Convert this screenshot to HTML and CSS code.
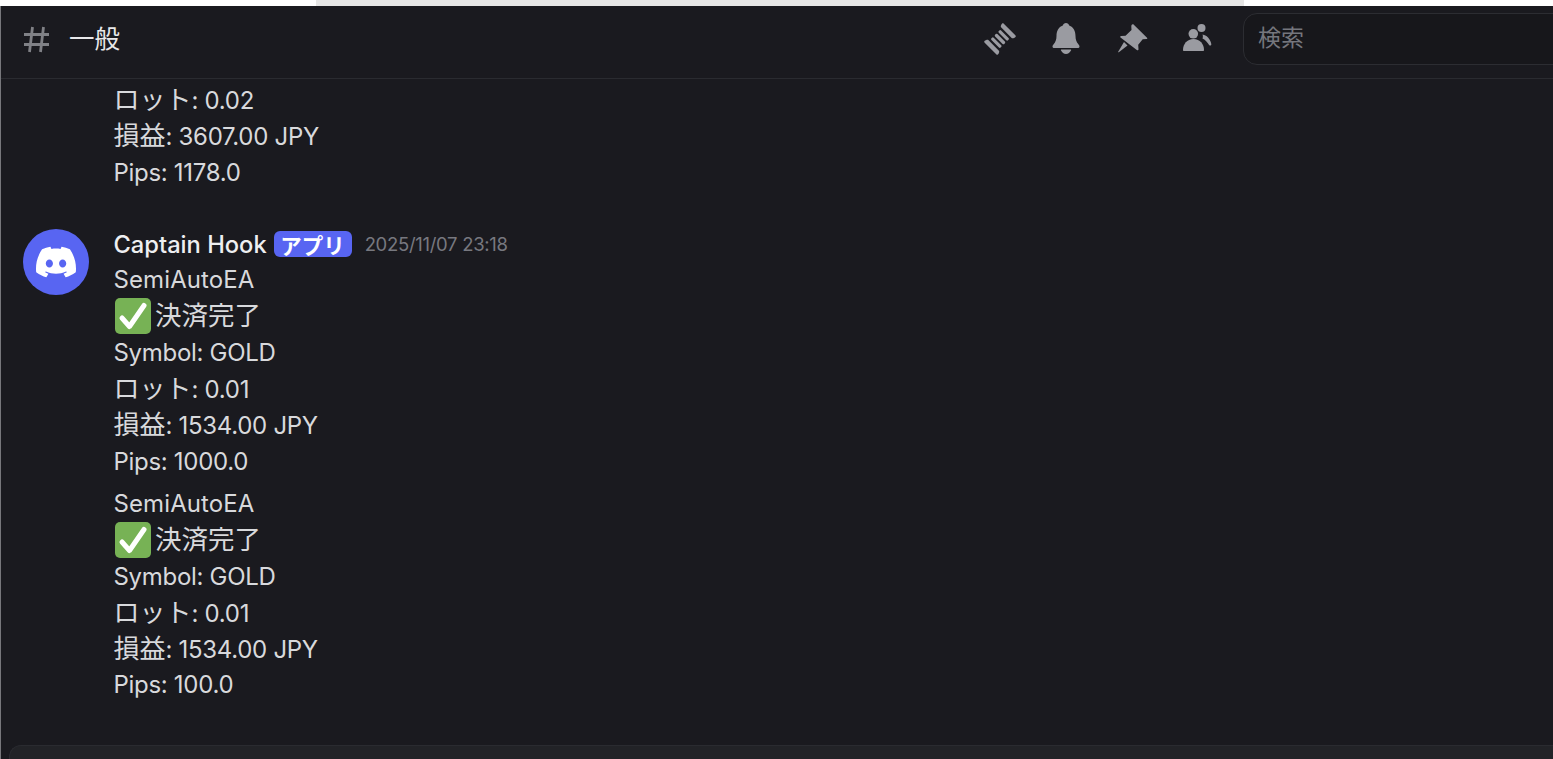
FILE: index.html
```html
<!DOCTYPE html>
<html lang="ja">
<head>
    <meta charset="UTF-8">
    <title>一般</title>
    <link rel="stylesheet" href="styles.css">
</head>
<body>
    <div class="top-strip">
        <div class="strip-white strip-left"></div>
        <div class="strip-grey"></div>
        <div class="strip-white"></div>
    </div>
    <div class="app">
        <header class="channel-bar">
            <svg class="hash" viewBox="0 0 27 27"><path d="M9.500 1 6.500 26M20.500 1l-3 25M1 8.500h25M1 18.500h25"/></svg>
            <span class="channel-name">一般</span>
            <div class="toolbar">
                <svg class="tool" viewBox="0 0 32 32"><g transform="rotate(45 16 16)"><path d="M6.500 3.500c0-.5.500-1 1-1h17c.5 0 1 .5 1 1 0 1.500-1 3.500-2 3.500H8.500c-1 0-2-2-2-3.500Z"/><rect x="9.500" y="9.200" width="13" height="3.200" rx="1.200"/><rect x="9.500" y="14.400" width="13" height="3.200" rx="1.200"/><rect x="9.500" y="19.600" width="13" height="3.200" rx="1.200"/><path d="M6.500 28.500c0 .5.500 1 1 1h17c.5 0 1-.5 1-1 0-1.500-1-3.500-2-3.500H8.500c-1 0-2 2-2 3.500Z"/></g></svg>
                <svg class="tool" viewBox="0 0 32 32"><path d="M16 0c1.600 0 2.800 1 3.200 2.400C23.500 3.800 25.500 8 25.500 13c0 3.500 1 6 2.700 8 .8 1 1.300 1.700 1.300 2.500 0 1-.8 1.500-2 1.500H4.500c-1.200 0-2-.5-2-1.500 0-.8.500-1.500 1.300-2.500 1.700-2 2.700-4.500 2.700-8 0-5 2-9.200 6.300-10.600C13.200 1 14.400 0 16 0Z"/><path d="M11.500 26.500h9c.6 0 .8.500.5 1-1 1.800-2.800 3.500-5 3.500s-4-1.700-5-3.500c-.3-.5-.1-1 .5-1Z"/></svg>
                <svg class="tool" viewBox="0 0 32 32"><g transform="translate(1.500 0)"><path d="M14.500 1.800c.5-.6 1.300-.6 1.800 0L29.500 14.800c.6.600.2 1.300-.5 1.300l-3.800.2-4.500 5.500.3 4.500c0 1-1 1.300-1.700.7L3 14.500c-.6-.6-.3-1.500.6-1.600l4.400-.2 6-5.800-.2-3.500c0-.8.200-1.300.7-1.900Z"/><path d="M6.500 19 10 22.500 1.300 29.300c-.4.200-.8-.2-.6-.6L6.500 19Z"/></g></svg>
                <svg class="tool" viewBox="0 0 32 32"><circle cx="19.500" cy="5" r="4"/><circle cx="11.300" cy="10.800" r="4.800"/><path d="M2 28c-.6 0-1-.4-1-1 0-6 4-11 10.500-11S22 21 22 27c0 .6-.4 1-1 1H2Z"/><path d="M20.500 11.500c3.500.5 5.500 2.500 7 5 1 1.700 1.800 3.500 1.800 5 0 1.200-1.500 1.500-2.200.5-1.500-2.500-3.500-5-6.600-6.500.5-1.200.5-2.800 0-4Z"/></svg>
            </div>
            <div class="search"><span class="search-label">検索</span></div>
        </header>

        <main class="messages">
            <div class="lines lines-first">
                <div><span class="ja">ロット</span>: 0.02</div>
                <div><span class="ja">損益</span>: 3607.00 JPY</div>
                <div>Pips: 1178.0</div>
            </div>

            <article class="message">
                <div class="avatar">
                    <svg viewBox="0 0 24 24"><path d="M20.317 4.3698a19.7913 19.7913 0 00-4.8851-1.5152.0741.0741 0 00-.0785.0371c-.211.3753-.4447.8648-.6083 1.2495-1.8447-.2762-3.68-.2762-5.4868 0-.1636-.3933-.4058-.8742-.6177-1.2495a.077.077 0 00-.0785-.037 19.7363 19.7363 0 00-4.8852 1.515.0699.0699 0 00-.0321.0277C.5334 9.0458-.319 13.5799.0992 18.0578a.0824.0824 0 00.0312.0561c2.0528 1.5076 4.0413 2.4228 5.9929 3.0294a.0777.0777 0 00.0842-.0276c.4616-.6304.8731-1.2952 1.226-1.9942a.076.076 0 00-.0416-.1057c-.6528-.2476-1.2743-.5495-1.8722-.8923a.077.077 0 01-.0076-.1277c.1258-.0943.2517-.1923.3718-.2914a.0743.0743 0 01.0776-.0105c3.9278 1.7933 8.18 1.7933 12.0614 0a.0739.0739 0 01.0785.0095c.1202.099.246.1981.3728.2924a.077.077 0 01-.0066.1276 12.2986 12.2986 0 01-1.873.8914.0766.0766 0 00-.0407.1067c.3604.698.7719 1.3628 1.225 1.9932a.076.076 0 00.0842.0286c1.961-.6067 3.9495-1.5219 6.0023-3.0294a.077.077 0 00.0313-.0552c.5004-5.177-.8382-9.6739-3.5485-13.6604a.061.061 0 00-.0312-.0286zM8.02 15.3312c-1.1825 0-2.1569-1.0857-2.1569-2.419 0-1.3332.9555-2.4189 2.157-2.4189 1.2108 0 2.1757 1.0952 2.1568 2.419 0 1.3332-.9555 2.4189-2.1569 2.4189zm7.9748 0c-1.1825 0-2.1569-1.0857-2.1569-2.419 0-1.3332.9554-2.4189 2.1569-2.4189 1.2108 0 2.1757 1.0952 2.1568 2.419 0 1.3332-.946 2.4189-2.1568 2.4189Z"/></svg>
                </div>
                <div class="body">
                    <div class="meta">
                        <span class="author">Captain Hook</span>
                        <span class="badge">アプリ</span>
                        <span class="time">2025/11/07 23:18</span>
                    </div>
                    <div class="lines">
                        <div class="ea-name">SemiAutoEA</div>
                        <div class="done"><svg class="check" viewBox="0 0 36 36"><rect width="36" height="36" rx="5"/><path d="M7 20l7.500 8.500L29 7.500"/></svg><span class="ja">決済完了</span></div>
                        <div>Symbol: GOLD</div>
                        <div><span class="ja">ロット</span>: 0.01</div>
                        <div><span class="ja">損益</span>: 1534.00 JPY</div>
                        <div>Pips: 1000.0</div>
                    </div>
                    <div class="lines lines-next">
                        <div class="ea-name">SemiAutoEA</div>
                        <div class="done"><svg class="check" viewBox="0 0 36 36"><rect width="36" height="36" rx="5"/><path d="M7 20l7.500 8.500L29 7.500"/></svg><span class="ja">決済完了</span></div>
                        <div>Symbol: GOLD</div>
                        <div><span class="ja">ロット</span>: 0.01</div>
                        <div><span class="ja">損益</span>: 1534.00 JPY</div>
                        <div>Pips: 100.0</div>
                    </div>
                </div>
            </article>
        </main>

        <div class="composer"></div>
    </div>
</body>
</html>
```

FILE: styles.css
```css
html, body {
    height: 100%;
}

body {
    margin: 0;
    display: flex;
    flex-direction: column;
    overflow: hidden;
    background: #1a1a1f;
    color: #d8d9dc;
    font-family: Inter, "Noto Sans CJK JP", sans-serif;
}

.top-strip {
    display: flex;
    height: 6px;
    flex: none;
}

.strip-white {
    flex: 1;
    background: #fff;
}

.strip-left {
    flex: 0 0 316px;
}

.strip-grey {
    flex: 0 0 928px;
    background: #e6e6e6;
}

.app {
    flex: 1;
    min-height: 0;
    display: flex;
    flex-direction: column;
    border-left: 1px solid #77777b;
}

.channel-bar {
    flex: none;
    height: 66px;
    padding-bottom: 6px;
    display: flex;
    align-items: center;
    padding-left: 22px;
    border-bottom: 1px solid #2a2b30;
}

.hash {
    width: 27px;
    height: 27px;
    fill: none;
    stroke: #808186;
    stroke-width: 2.800;
}

.channel-name {
    margin-left: 19px;
    margin-top: -5px;
    font-size: 25.500px;
    color: #e8e8ea;
}

.toolbar {
    margin-left: auto;
    display: flex;
    gap: 34px;
    align-items: center;
}

.tool {
    width: 32px;
    height: 32px;
    fill: #9a9ba1;
}

.search {
    flex: none;
    width: 330px;
    height: 52px;
    margin-left: 29px;
    margin-right: -20px;
    padding-left: 14px;
    box-sizing: border-box;
    display: flex;
    align-items: center;
    border: 1px solid #2c2d32;
    border-radius: 14px;
    background: #17171b;
    color: #75767d;
    font-size: 23px;
}

.search-label {
    margin-top: -6px;
}

.messages {
    flex: 1;
    min-height: 0;
    padding-top: 3px;
    padding-left: 112.500px;
}

.lines > div {
    height: 36.300px;
    line-height: 36.300px;
    font-size: 24px;
    letter-spacing: -0.300px;
    white-space: nowrap;
}

.lines .ja {
    font-size: 26px;
    letter-spacing: 0;
}

.lines .ea-name {
    letter-spacing: 0.100px;
}

.message {
    position: relative;
    margin-top: 35px;
}

.avatar {
    position: absolute;
    left: -91px;
    top: 3px;
    width: 66px;
    height: 66px;
    border-radius: 50%;
    background: #5865f2;
    display: flex;
    align-items: center;
    justify-content: center;
}

.avatar svg {
    width: 40px;
    height: 40px;
    fill: #fff;
}

.meta {
    height: 36.300px;
    display: flex;
    align-items: center;
}

.author {
    font-size: 23.700px;
    font-weight: 500;
    color: #eeeff1;
}

.badge {
    margin-left: 7px;
    height: 26px;
    width: 78px;
    border-radius: 6px;
    background: #5865f2;
    color: #fff;
    font-size: 21.500px;
    font-weight: 600;
    display: flex;
    align-items: center;
    justify-content: center;
}

.time {
    margin-left: 13px;
    font-size: 18.500px;
    letter-spacing: -0.300px;
    color: #77787f;
}

.lines-next {
    margin-top: 6px;
}

.lines .done {
    display: flex;
    align-items: center;
}

.lines .done .ja {
    font-size: 26.500px;
    margin-top: -3px;
}

.check {
    width: 36px;
    height: 36px;
    margin-left: 1px;
    margin-right: 4.500px;
    margin-top: -1px;
}

.check rect {
    fill: #77b255;
}

.check path {
    fill: none;
    stroke: #fff;
    stroke-width: 5;
    stroke-linecap: round;
    stroke-linejoin: round;
}

.composer {
    flex: none;
    height: 13px;
    margin-left: 8px;
    background: #222327;
    border: 1px solid #2a2b30;
    border-bottom: none;
    border-right: none;
    border-radius: 12px 0 0 0;
}
```
